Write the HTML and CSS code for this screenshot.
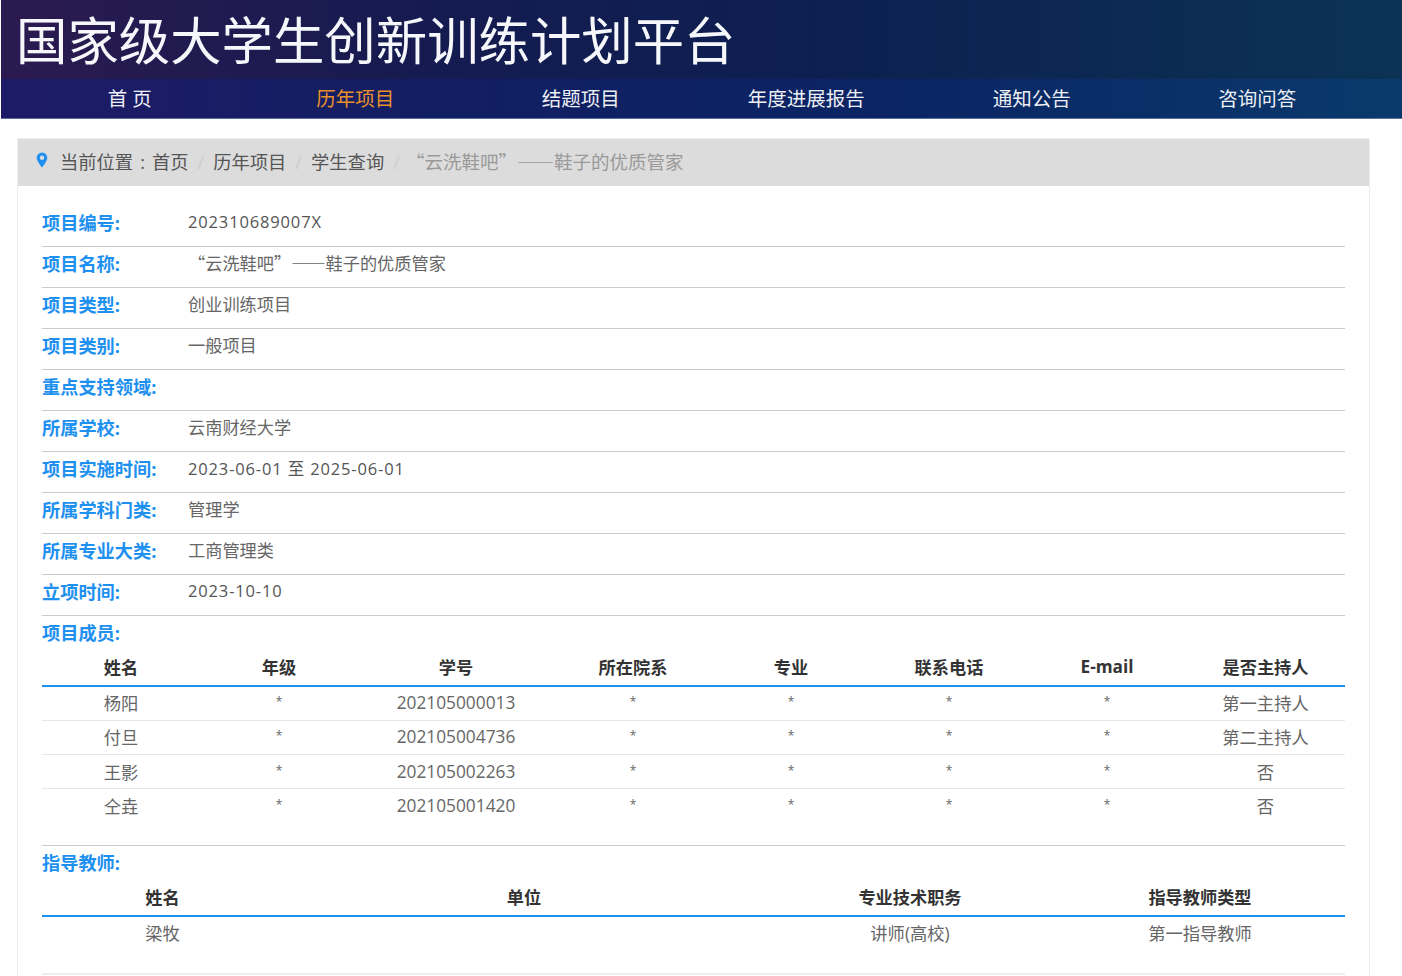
FILE: index.html
```html
<!DOCTYPE html>
<html lang="zh-CN">
<head>
  <meta charset="UTF-8" />
  <title>国家级大学生创新训练计划平台</title>
  <link rel="stylesheet" href="styles.css">
</head>
<body>
  <div class="page">
    <header class="header">
      <div class="brand">国家级大学生创新训练计划平台</div>
      <nav class="nav">
        <a>首 页</a>
        <a class="active">历年项目</a>
        <a>结题项目</a>
        <a>年度进展报告</a>
        <a>通知公告</a>
        <a>咨询问答</a>
      </nav>
    </header>

    <main class="panel">
      <div class="crumbs">
        <svg class="pin" viewBox="0 0 12 16" width="12" height="16" aria-hidden="true">
          <path fill-rule="evenodd" d="M6 .5A5.3 5.3 0 0 0 .7 5.8C.7 9.2 6 15.5 6 15.5s5.3-6.3 5.3-9.700A5.300 5.300 0 0 0 6 .5zm0 7.400a2.200 2.200 0 1 1 0-4.400 2.200 2.200 0 0 1 0 4.400z"/>
        </svg>
        <span>当前位置</span>
        <span class="colon">:</span>
        <span>首页</span>
        <span class="sep">/</span>
        <span>历年项目</span>
        <span class="sep">/</span>
        <span>学生查询</span>
        <span class="sep">/</span>
        <span class="crumb-last cjk">“云洗鞋吧”——鞋子的优质管家</span>
      </div>

      <div class="detail">
        <div class="row"><label>项目编号:</label><span class="num">202310689007X</span></div>
        <div class="row"><label>项目名称:</label><span class="cjk">“云洗鞋吧”——鞋子的优质管家</span></div>
        <div class="row"><label>项目类型:</label><span>创业训练项目</span></div>
        <div class="row"><label>项目类别:</label><span>一般项目</span></div>
        <div class="row"><label>重点支持领域:</label><span></span></div>
        <div class="row"><label>所属学校:</label><span>云南财经大学</span></div>
        <div class="row"><label>项目实施时间:</label><span class="num">2023-06-01 至 2025-06-01</span></div>
        <div class="row"><label>所属学科门类:</label><span>管理学</span></div>
        <div class="row"><label>所属专业大类:</label><span>工商管理类</span></div>
        <div class="row"><label>立项时间:</label><span class="num">2023-10-10</span></div>

        <div class="block members">
          <label>项目成员:</label>
          <table>
            <colgroup>
              <col class="c158"><col class="c158"><col class="c196"><col class="c158">
              <col class="c158"><col class="c158"><col class="c158"><col>
            </colgroup>
            <thead>
              <tr><th>姓名</th><th>年级</th><th>学号</th><th>所在院系</th><th>专业</th><th>联系电话</th><th>E-mail</th><th>是否主持人</th></tr>
            </thead>
            <tbody>
              <tr><td>杨阳</td><td class="star">*</td><td>202105000013</td><td class="star">*</td><td class="star">*</td><td class="star">*</td><td class="star">*</td><td>第一主持人</td></tr>
              <tr><td>付旦</td><td class="star">*</td><td>202105004736</td><td class="star">*</td><td class="star">*</td><td class="star">*</td><td class="star">*</td><td>第二主持人</td></tr>
              <tr><td>王影</td><td class="star">*</td><td>202105002263</td><td class="star">*</td><td class="star">*</td><td class="star">*</td><td class="star">*</td><td>否</td></tr>
              <tr><td>仝垚</td><td class="star">*</td><td>202105001420</td><td class="star">*</td><td class="star">*</td><td class="star">*</td><td class="star">*</td><td>否</td></tr>
            </tbody>
          </table>
        </div>

        <div class="block teachers">
          <label>指导教师:</label>
          <table>
            <colgroup>
              <col class="c241"><col class="c482"><col class="c290"><col>
            </colgroup>
            <thead>
              <tr><th>姓名</th><th>单位</th><th>专业技术职务</th><th>指导教师类型</th></tr>
            </thead>
            <tbody>
              <tr><td>梁牧</td><td></td><td>讲师(高校)</td><td>第一指导教师</td></tr>
            </tbody>
          </table>
        </div>
      </div>
    </main>
  </div>
</body>
</html>
```

FILE: styles.css
```css
* {
  box-sizing: border-box;
}

body {
  margin: 0;
  background: #fff;
  color: #555;
  font-family: "Open Sans", "Noto Sans CJK SC", sans-serif;
  font-size: 16px;
}

.page {
  height: 976px;
  overflow: hidden;
}

/* full-width quotes and dashes come from the CJK face */
.cjk {
  font-family: "Noto Sans CJK SC", sans-serif;
}

/* Header */
.header {
  margin-left: 1px;
  height: 119px;
}

.brand {
  height: 79px;
  padding-left: 15px;
  background: linear-gradient(90deg, #2b1a4f 0%, #151b50 30%, #0d1f50 58%, #0b3355 100%);
  color: #f6f7fa;
  font-size: 51.4px;
  line-height: 80px;
  white-space: nowrap;
}

.nav {
  display: flex;
  height: 40px;
  padding: 0 32px 0 16px;
  background: linear-gradient(90deg, #1e1b66 0%, #111f62 35%, #0a2564 65%, #0a3a6c 100%);
  border-bottom: 1px solid #5a6f99;
}

.nav a {
  flex: 1;
  text-align: center;
  color: #eef0f5;
  font-size: 19.5px;
  line-height: 39px;
  white-space: nowrap;
}

.nav a.active {
  color: #e8912c;
}

/* Panel */
.panel {
  width: 1353px;
  height: 858px;
  margin: 19px 0 0 17px;
  border: 1px solid #eee;
  border-bottom: 0;
}

.crumbs {
  display: flex;
  align-items: center;
  height: 47px;
  padding: 0 0 3px 18px;
  background: #dcdcdc;
  color: #555;
  font-size: 18.3px;
  white-space: nowrap;
}

.pin {
  fill: #1e90f0;
  margin: 0 12px 3px 0;
}

.colon {
  margin: 0 7px;
}

.sep {
  margin: 0 9px;
  color: #ccc;
}

.crumb-last {
  margin-left: -3px;
  color: #999;
  font-size: 18.5px;
}

.detail {
  padding: 20px 24px 0;
}

.row {
  display: flex;
  align-items: center;
  height: 41px;
  padding-bottom: 9px;
  border-bottom: 1px solid #ccc;
}

label {
  color: #1e90f0;
  font-size: 18.2px;
  font-weight: 700;
  white-space: nowrap;
}

.row label {
  flex: none;
  width: 146px;
}

.row span {
  color: #666;
  font-size: 17.2px;
  white-space: nowrap;
}

.row .num {
  color: #555;
  font-size: 16.5px;
  letter-spacing: 0.85px;
}

.block {
  padding-top: 7px;
}

.block > label {
  display: block;
  line-height: 20px;
}

.members {
  height: 230px;
  border-bottom: 1px solid #ccc;
}

.teachers {
  height: 129px;
  border-bottom: 2px solid #eee;
}

table {
  width: 100%;
  margin-top: 7px;
  border-collapse: collapse;
  table-layout: fixed;
  text-align: center;
  font-size: 17.3px;
}

th {
  height: 36px;
  padding: 0 0 2px;
  color: #333;
  font-size: 17.2px;
  font-weight: 700;
  border-bottom: 2px solid #1e90f0;
}

td {
  height: 34.3px;
  padding: 0 0 1px;
  color: #666;
  border-bottom: 1px solid #e6e6e6;
}

td.star {
  font-size: 12px;
  padding-bottom: 3px;
}

.teachers td {
  padding-bottom: 3px;
}

tbody tr:last-child td {
  border-bottom: 0;
}

.c158 { width: 158px; }
.c196 { width: 196px; }
.c241 { width: 241px; }
.c482 { width: 482px; }
.c290 { width: 290px; }
```
